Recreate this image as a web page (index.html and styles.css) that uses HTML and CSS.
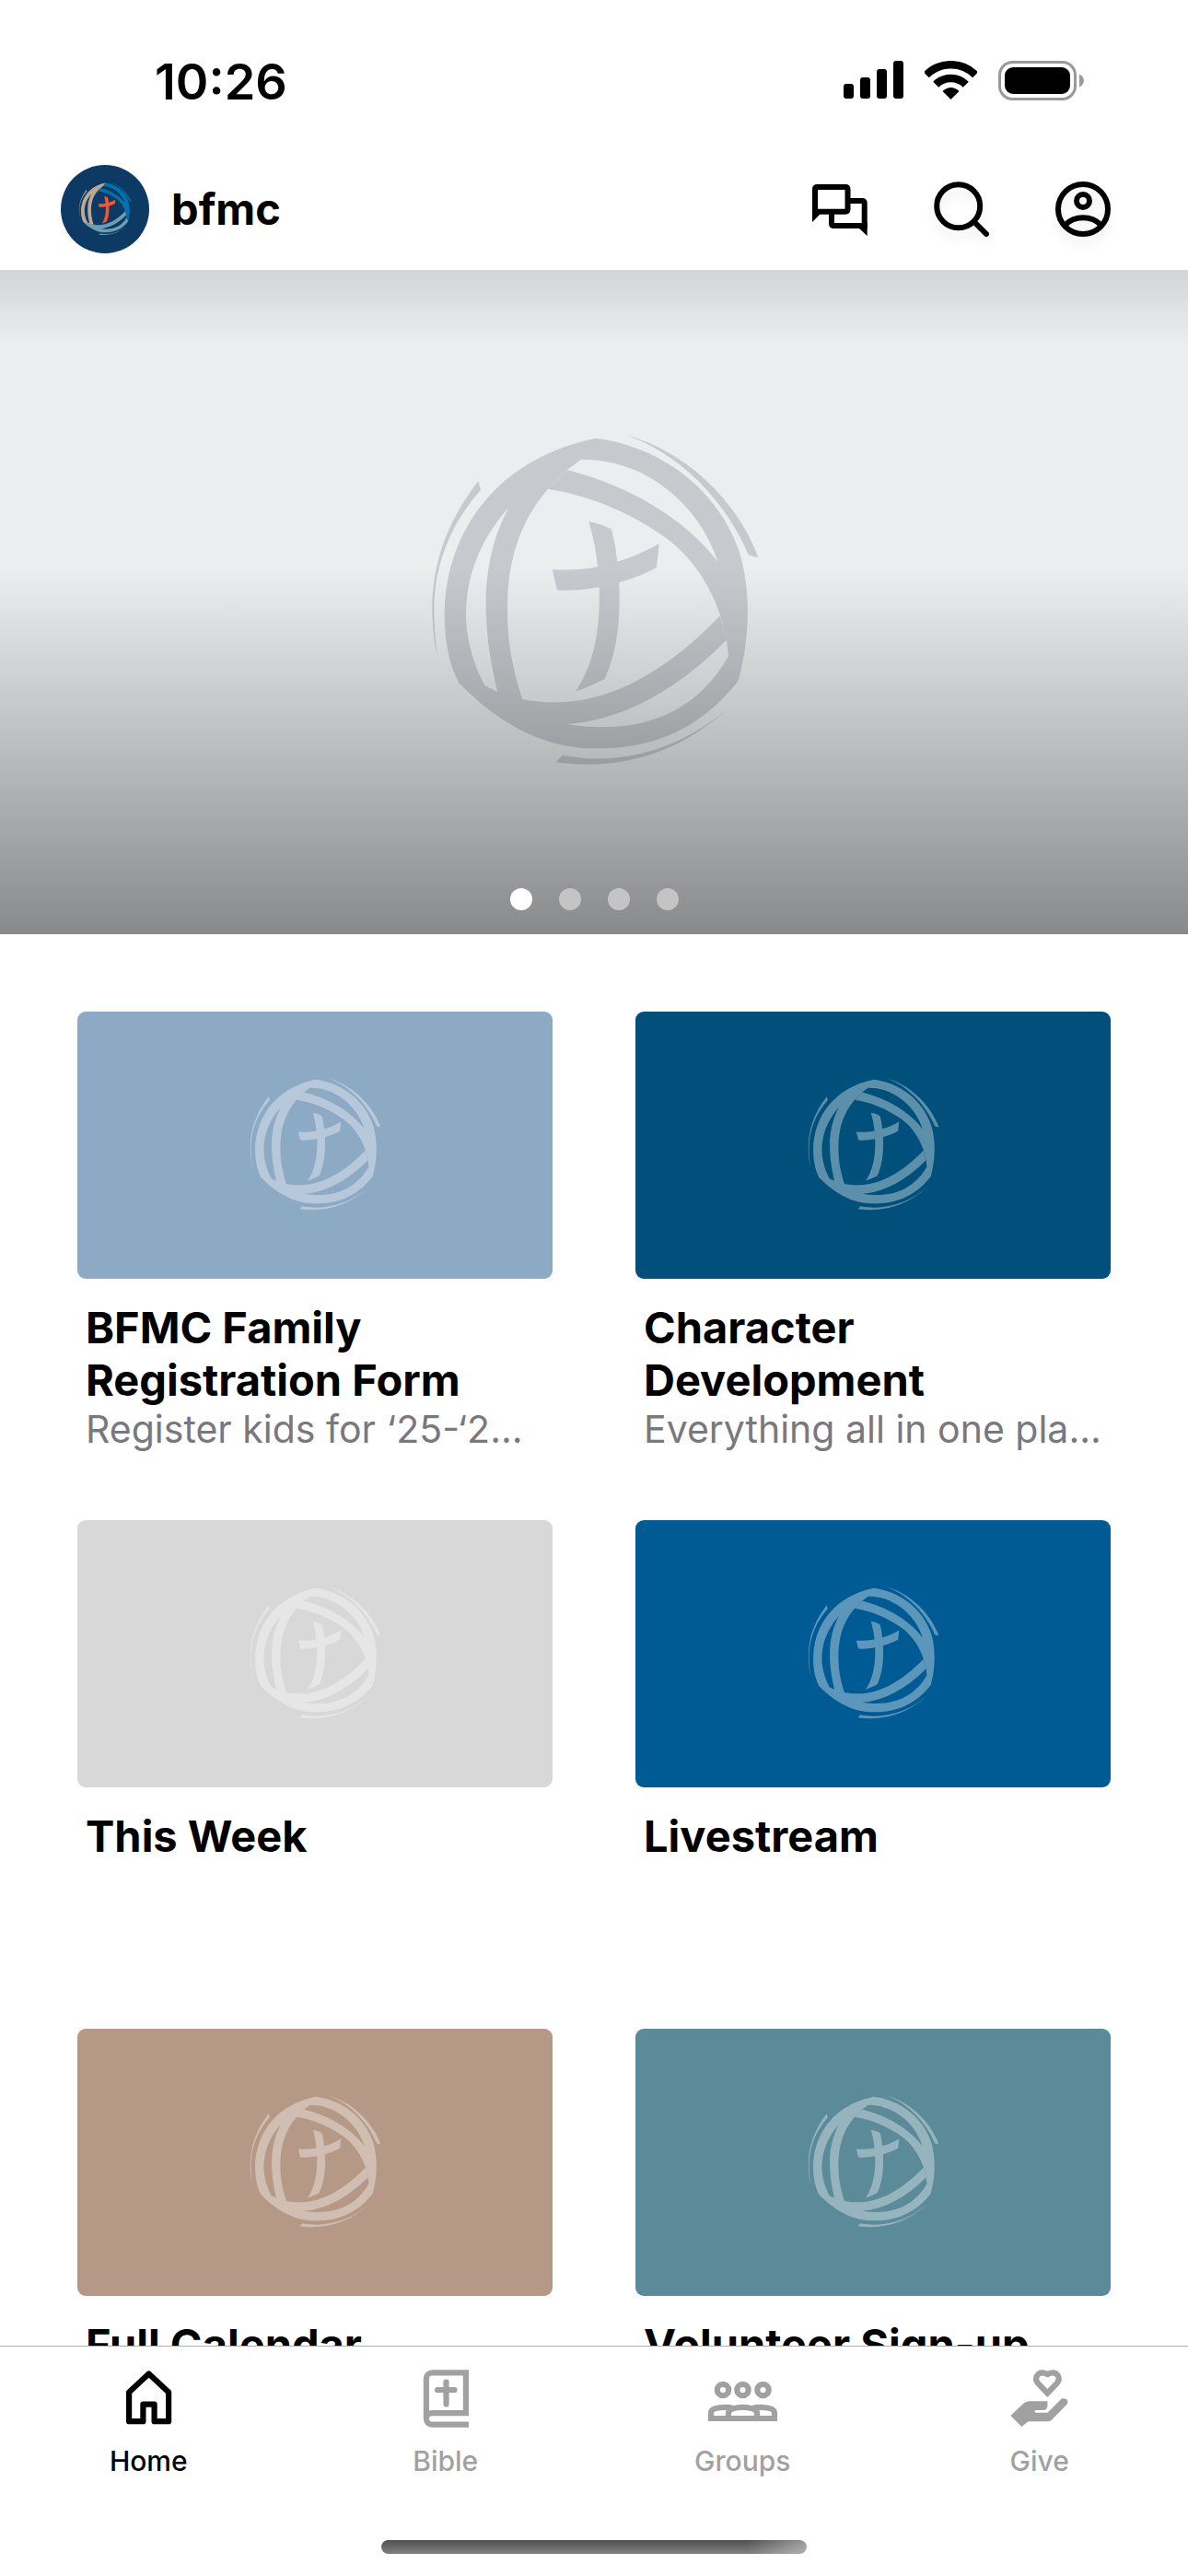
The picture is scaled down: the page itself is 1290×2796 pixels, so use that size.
FILE: index.html
```
<!DOCTYPE html>
<html lang="en">
<head>
  <meta charset="UTF-8">
  <meta name="viewport" content="width=device-width, initial-scale=1.0">
  <title>bfmc</title>
  <link rel="stylesheet" href="styles.css">
</head>
<body>

  <!-- Shared logo: three brush bands + cross -->
  <svg class="sprite" aria-hidden="true">
    <symbol id="logo" viewBox="15 40 1200 1200">
      <g class="logo-left">
        <path fill-rule="evenodd" d="M620 105C300 170 128 410 128 680C128 770 145 845 175 902L300 1000L382 955C345 840 333 760 333 660C333 500 375 375 465 270L527 208L575 173L650 120ZM337 330C240 440 198 560 198 680C198 760 225 850 260 911L300 930C275 820 263 740 263 640C263 520 290 420 337 330Z"/>
        <path d="M238 245C140 370 88 510 88 660C88 720 95 775 107 822C98 770 94 720 94 660C94 520 150 380 246 274Z"/>
      </g>
      <g class="logo-right">
        <path fill-rule="evenodd" d="M620 105C830 130 1020 270 1090 480C1125 600 1125 750 1085 895L1055 905L1053 815L1047 762L1026 680C990 575 930 490 850 430C740 350 600 290 465 270L527 208L575 174ZM575 174C760 170 950 300 1019 508C910 365 730 260 527 208Z"/>
        <path d="M715 93C900 140 1080 300 1150 493L1119 486C1045 310 890 150 715 93Z"/>
      </g>
      <g class="logo-bottom">
        <path fill-rule="evenodd" d="M1026 683C850 865 670 965 490 965C450 965 415 962 382 955L290 930L175 902C330 1060 480 1115 615 1115C800 1118 960 1055 1085 895L1053 815L1047 762ZM1047 762C880 930 700 1025 525 1036C790 1078 960 980 1053 815Z"/>
        <path d="M512 1137L491 1160C720 1190 900 1120 1055 984C900 1110 720 1175 512 1137Z"/>
      </g>
      <path class="logo-cross" d="M598 376C625 381 650 390 672 401Q686 455 691 507C735 494 780 475 827 448L819 526Q760 558 697 574C702 700 690 800 650 889Q605 912 555 930C615 840 636 730 632 590Q565 603 495 599L479 532Q550 538 627 524Q620 450 598 376Z"/>
    </symbol>
  </svg>

  <div class="app">
    <header>
      <div class="status-bar">
        <time>10:26</time>
        <div class="status-icons">
          <svg width="65" height="42" viewBox="0 0 65 42">
            <rect x="0" y="25" width="11" height="16" rx="3"/>
            <rect x="18" y="18" width="11" height="23" rx="3"/>
            <rect x="36" y="9" width="11" height="32" rx="3"/>
            <rect x="54" y="0" width="11" height="41" rx="3"/>
          </svg>
          <svg width="57" height="42" viewBox="0 0 57 42">
            <path d="M1.8 15.3A37.7 37.7 0 0 1 55.2 15.3M12.2 25.7A23 23 0 0 1 44.8 25.7" fill="none" stroke="#000" stroke-width="8.5"/>
            <path d="M28.5 42L19.5 33Q28.5 25 37.500 33Z"/>
          </svg>
          <svg width="94" height="44" viewBox="0 0 94 44">
            <rect x="1.500" y="1.500" width="82" height="40" rx="14" fill="none" stroke="#999" stroke-width="3"/>
            <rect x="7" y="7" width="71" height="29" rx="9"/>
            <path d="M88 14.500C94.500 17 94.500 26 88 28.500Z" fill="#999"/>
          </svg>
        </div>
      </div>

      <div class="top-bar">
        <div class="avatar"><svg><use href="#logo"/></svg></div>
        <h1>bfmc</h1>
        <nav class="actions">
          <button aria-label="Messages">
            <svg viewBox="0 0 72 72">
              <path d="M9 44V14.500Q9 12 11.500 12H42Q44.500 12 44.500 14.500V36Q44.500 38.700 42 38.700H9M46 27H60Q62.700 27 62.700 29.500V54H29.500Q27 54 27 51.500V40"/>
              <path class="solid" d="M6 36V50L14.500 41.500ZM65.700 50V65L57 57Z"/>
            </svg>
          </button>
          <button class="raised" aria-label="Search">
            <svg viewBox="0 0 72 72">
              <circle cx="32.700" cy="32.700" r="23.500"/>
              <path d="M50 50L63 63" stroke-linecap="round"/>
            </svg>
          </button>
          <button class="raised" aria-label="Profile">
            <svg viewBox="0 0 72 72">
              <circle cx="36" cy="36" r="27"/>
              <circle cx="36" cy="27" r="7"/>
              <path d="M16 53.500C27 42.500 45 42.500 56 53.500"/>
            </svg>
          </button>
        </nav>
      </div>
    </header>

    <main>
      <section class="hero">
        <svg class="hero-logo"><use href="#logo"/></svg>
        <div class="dots">
          <button class="dot active" aria-label="Slide 1"></button>
          <button class="dot" aria-label="Slide 2"></button>
          <button class="dot" aria-label="Slide 3"></button>
          <button class="dot" aria-label="Slide 4"></button>
        </div>
      </section>

      <section class="cards">
        <a class="card" href="#">
          <div class="thumb sky"><svg><use href="#logo"/></svg></div>
          <h2>BFMC Family Registration Form</h2>
          <p>Register kids for ‘25-‘2...</p>
        </a>
        <a class="card" href="#">
          <div class="thumb navy"><svg><use href="#logo"/></svg></div>
          <h2>Character Development</h2>
          <p>Everything all in one pla...</p>
        </a>
        <a class="card" href="#">
          <div class="thumb gray"><svg><use href="#logo"/></svg></div>
          <h2>This Week</h2>
        </a>
        <a class="card" href="#">
          <div class="thumb blue"><svg><use href="#logo"/></svg></div>
          <h2>Livestream</h2>
        </a>
        <a class="card" href="#">
          <div class="thumb tan"><svg><use href="#logo"/></svg></div>
          <h2>Full Calendar</h2>
        </a>
        <a class="card" href="#">
          <div class="thumb teal"><svg><use href="#logo"/></svg></div>
          <h2>Volunteer Sign-up</h2>
        </a>
      </section>
    </main>

    <footer>
      <nav class="tabs">
        <a class="tab active" href="#">
          <svg viewBox="0 0 75 75">
            <path stroke-linejoin="round" d="M16.100 30.500L37.600 10.500L59.100 30.500V62.200H43.600V43.700H31.400V62.200H16.100Z"/>
          </svg>
          Home
        </a>
        <a class="tab" href="#">
          <svg viewBox="0 0 75 75">
            <path d="M63 65.600H23.200A6.300 6.300 0 0 1 16.900 59.300V15.700A6.300 6.300 0 0 1 23.200 9.400H59.900V53.100H23.200A6.300 6.300 0 0 0 16.900 59.300M58 53.100H63"/>
            <path stroke-linecap="round" d="M38.500 19.500V43.500M29 28H47.500"/>
          </svg>
          Bible
        </a>
        <a class="tab" href="#">
          <svg viewBox="0 0 75 75">
            <circle cx="16" cy="28" r="6.200"/>
            <circle cx="37.500" cy="28" r="6.200"/>
            <circle cx="59.500" cy="28" r="6.200"/>
            <path d="M3.100 59V52.500C3.100 48.500 11 46.800 18 46.800Q23 46.800 27 48M22 59V53C22 49 30 46.800 37.500 46.800S53 49 53 53V59M48 48Q52 46.800 57 46.800C64 46.800 71.900 48.500 71.900 52.500V59M0 59H75"/>
          </svg>
          Groups
        </a>
        <a class="tab" href="#">
          <svg viewBox="0 0 75 75">
            <path d="M46.400 31.500L36.200 21C31 14.500 36.500 8 43 9.700L46.400 11.200L49.800 9.700C56.300 8 61.800 14.500 56.600 21Z"/>
            <path class="solid" d="M6.400 56L20 43Q23 40.300 26.500 40.300H46.400V45Q46.400 50 41.500 50H33.500Q31.500 51.300 33.500 52.700H46.400L60.500 38.800C64 35 71 39 67.500 43.800L51.500 60Q49.500 62.300 47 62.300H25.400L18.400 68Z"/>
          </svg>
          Give
        </a>
      </nav>
      <div class="home-indicator"></div>
    </footer>
  </div>

</body>
</html>
```
FILE: styles.css
```
/* Reset */
* { box-sizing: border-box; margin: 0; padding: 0; }
body {
  font-family: Inter, "Liberation Sans", sans-serif;
  background: #fff;
  color: #000;
}
a { color: inherit; text-decoration: none; }
button { background: none; border: none; cursor: pointer; }
svg { display: block; }
.sprite { position: absolute; width: 0; height: 0; }

.app {
  display: flex;
  flex-direction: column;
  height: 100vh;
}

/* Logo bands, single colour unless a parent sets the variables */
.logo-left { fill: var(--left, currentColor); }
.logo-right { fill: var(--right, currentColor); }
.logo-bottom { fill: var(--bottom, currentColor); }
.logo-cross { fill: var(--cross, currentColor); }

/* Header */
header {
  padding-bottom: 12px;
}
.status-bar {
  display: flex;
  align-items: center;
  justify-content: space-between;
  height: 173px;
  padding: 3px 112px 0 168px;
  font-size: 54px;
  font-weight: 600;
}
.status-icons {
  display: flex;
  gap: 23px;
}
.top-bar {
  display: flex;
  align-items: center;
  height: 108px;
  padding: 0 78px 0 66px;
}
.top-bar h1 {
  margin-left: 24px;
  padding-bottom: 2px;
  font-size: 47px;
  font-weight: 700;
}
.avatar {
  display: flex;
  align-items: center;
  justify-content: center;
  width: 96px;
  height: 96px;
  border-radius: 50%;
  background: #0c3a64;
  --left: #bfa893;
  --right: #0072ad;
  --bottom: #6a9fb3;
  --cross: #fc5429;
}
.avatar svg {
  width: 64px;
  height: 64px;
}
.actions {
  display: flex;
  gap: 60px;
  margin-left: auto;
}
.actions svg {
  width: 72px;
  height: 72px;
  fill: none;
  stroke: #000;
  stroke-width: 6;
}
.actions .solid {
  fill: #000;
  stroke: none;
}
.raised svg {
  filter: drop-shadow(0 9px 6px rgba(0,0,0,0.06));
}

/* Scrolling content */
main {
  flex: 1;
  min-height: 0;
  overflow-y: auto;
  scrollbar-width: none;
}
.hero {
  position: relative;
  display: flex;
  align-items: center;
  justify-content: center;
  aspect-ratio: 1290 / 721;
  background: #ecedef;
}
.hero::after {
  content: "";
  position: absolute;
  inset: 0;
  background:
    linear-gradient(rgba(0,0,0,0.11), transparent 11%),
    linear-gradient(transparent 45%, rgba(0,0,0,0.42));
}
.hero-logo {
  width: 400px;
  height: 400px;
  color: #c8c9ce;
}
.dots {
  position: absolute;
  bottom: 26px;
  z-index: 1;
  display: flex;
  gap: 29px;
}
.dot {
  width: 24px;
  height: 24px;
  border-radius: 50%;
  background: #c4c4c4;
}
.dot.active { background: #fff; }

/* Cards */
.cards {
  display: grid;
  grid-template-columns: repeat(2, minmax(0, 1fr));
  grid-auto-rows: 1fr;
  gap: 73px 90px;
  padding: 84px;
}
.thumb {
  display: flex;
  align-items: center;
  justify-content: center;
  aspect-ratio: 516 / 290;
  margin-bottom: 24px;
  border-radius: 9px;
}
.thumb svg {
  width: 160px;
  height: 160px;
  color: #fff;
  opacity: 0.36;
}
.sky { background: #8daac5; }
.navy { background: #00507b; }
.gray { background: #d8d8d8; }
.blue { background: #005b94; }
.tan { background: #b59986; }
.teal { background: #5b8a99; }
.card h2 {
  padding: 0 9px;
  font-size: 47px;
  font-weight: 700;
  line-height: 57px;
}
.card p {
  padding: 0 9px;
  font-size: 41px;
  line-height: 51px;
  white-space: nowrap;
  color: #78787d;
}

/* Tab bar */
footer {
  border-top: 1px solid #b0b0b0;
  padding: 19px 0 24px;
  background: #fff;
}
.tabs {
  display: flex;
}
.tab {
  flex: 1;
  display: flex;
  flex-direction: column;
  align-items: center;
  gap: 12px;
  font-size: 30px;
  font-weight: 500;
  line-height: 36px;
  color: #a1a1a1;
}
.tab.active { color: #000; }
.tab svg {
  width: 75px;
  height: 75px;
  fill: none;
  stroke: currentColor;
  stroke-width: 6.2;
}
.tab .solid {
  fill: currentColor;
  stroke: none;
}
.home-indicator {
  width: 462px;
  height: 15px;
  margin: 68px auto 0;
  border-radius: 8px;
  background:
    linear-gradient(90deg, transparent 86%, rgba(255,255,255,0.4)),
    linear-gradient(#505050, #808080);
}
```
